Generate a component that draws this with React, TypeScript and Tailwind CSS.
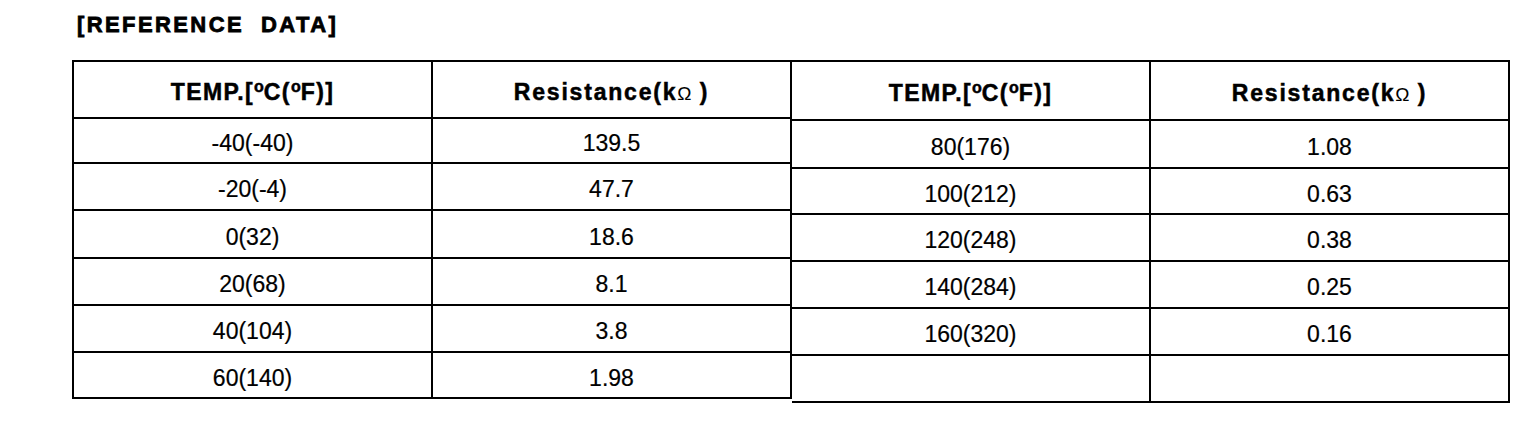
const leftRows = [
  ["-40(-40)", "139.5"],
  ["-20(-4)", "47.7"],
  ["0(32)", "18.6"],
  ["20(68)", "8.1"],
  ["40(104)", "3.8"],
  ["60(140)", "1.98"],
];

const rightRows = [
  ["80(176)", "1.08"],
  ["100(212)", "0.63"],
  ["120(248)", "0.38"],
  ["140(284)", "0.25"],
  ["160(320)", "0.16"],
  ["", ""],
];

// degree mark is a small raised "o" in the printed sheet
const Deg = () => <span className="relative -top-[8px] text-[16px] font-bold tracking-normal">o</span>;

const TempHead = () => (
  <span className="font-bold tracking-[1.4px] [-webkit-text-stroke:0.5px_black]">
    TEMP.[<Deg />C(<Deg />F)]
  </span>
);

const ResHead = () => (
  <span className="font-bold tracking-[1.8px] [-webkit-text-stroke:0.5px_black]">
    Resistance(k<span className="font-normal text-[19px] tracking-normal [-webkit-text-stroke:0px]">Ω</span> )
  </span>
);

const Cell = ({ children, first }: { children?: React.ReactNode; first?: boolean }) => (
  <div
    className={`flex items-center justify-center pt-[6px] border-b-2 border-r-2 border-black ${
      first ? "border-l-2" : ""
    }`}
  >
    {children}
  </div>
);

const App = () => {
  return (
    <div className="w-[1536px] h-[424px] bg-white text-black font-['Liberation_Sans',Arial,sans-serif]">
      <h1 className="pl-[77px] pt-[12px] text-[22px] leading-[25px] font-bold tracking-[2.4px] whitespace-pre [-webkit-text-stroke:0.8px_black]">
        [REFERENCE  DATA]
      </h1>

      <div className="flex mt-[23px] ml-[72px] text-[23px] leading-none [-webkit-text-stroke:0.2px_black]">
        {/* left half */}
        <div className="grid w-[720px] grid-cols-[361px_359px] grid-rows-[57px_45px_47px_48px_47px_47px_46px] border-t-2 border-black">
          <Cell first>
            <TempHead />
          </Cell>
          <Cell>
            <ResHead />
          </Cell>
          {leftRows.map(([t, r], i) => (
            <div key={i} className="contents">
              <Cell first>{t}</Cell>
              <Cell>{r}</Cell>
            </div>
          ))}
        </div>

        {/* right half, scanned slightly lower */}
        <div className="grid w-[718px] grid-cols-[359px_359px] grid-rows-[59px_48px_46px_47px_47px_47px_47px] border-t-2 border-black">
          <Cell>
            <TempHead />
          </Cell>
          <Cell>
            <ResHead />
          </Cell>
          {rightRows.map(([t, r], i) => (
            <div key={i} className="contents">
              <Cell>{t}</Cell>
              <Cell>{r}</Cell>
            </div>
          ))}
        </div>
      </div>
    </div>
  );
};

export default App;
